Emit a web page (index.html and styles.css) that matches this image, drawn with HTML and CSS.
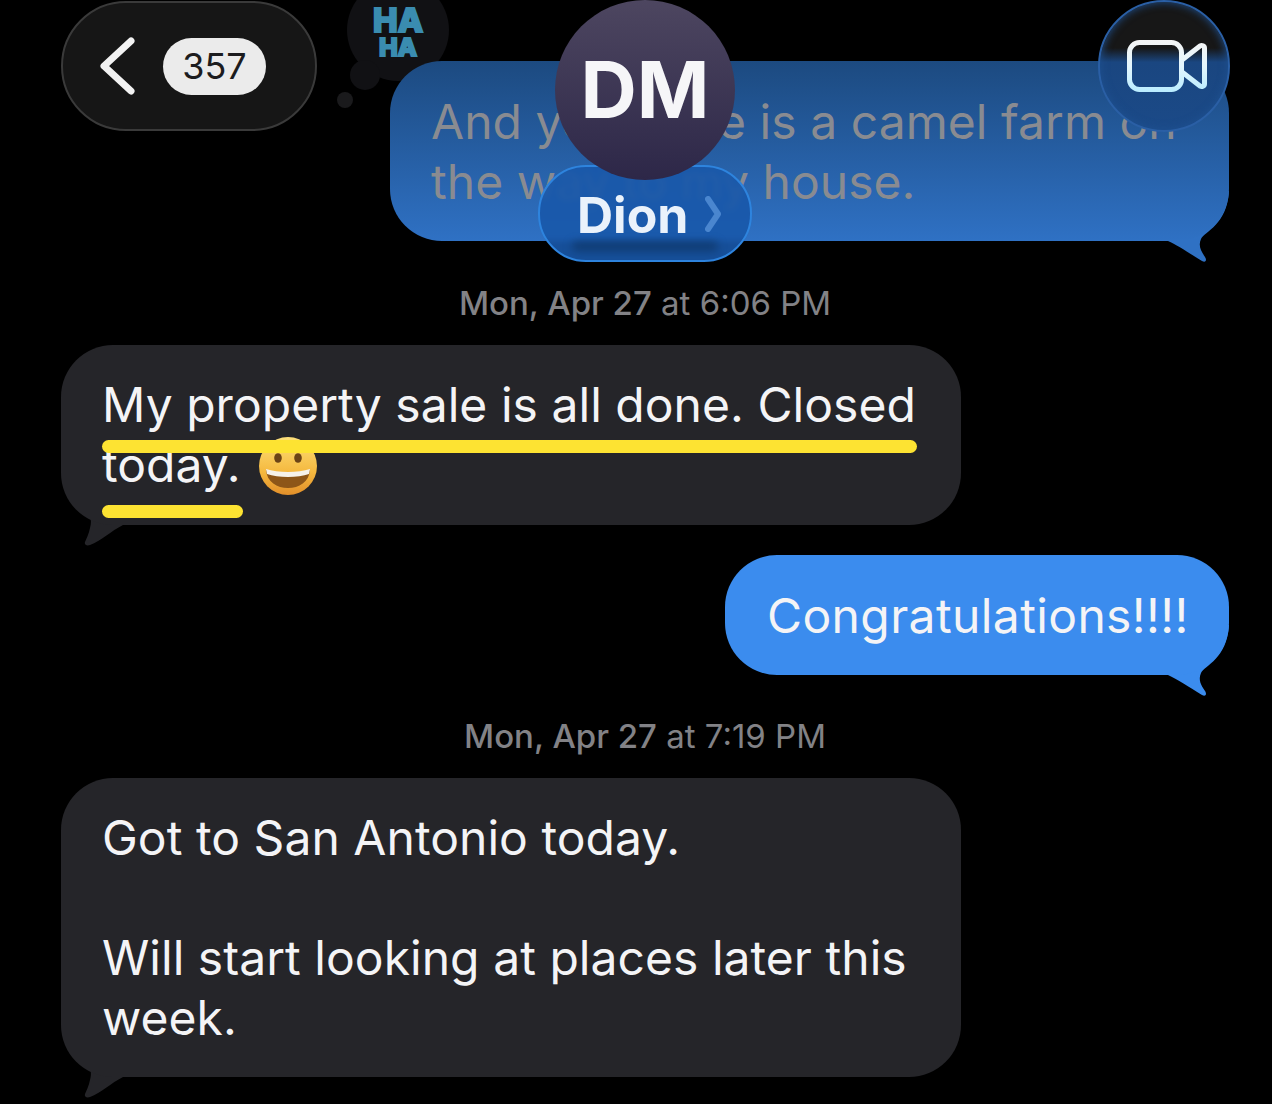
FILE: index.html
```html
<!DOCTYPE html>
<html>
<head>
  <meta charset="UTF-8">
  <link rel="stylesheet" href="styles.css">
</head>
<body>
  <div class="thread">
    <div class="reaction">
      <span class="reaction-dot big"></span>
      <span class="reaction-dot small"></span>
      <div class="reaction-text">
        <div class="ha-top">HA</div>
        <div class="ha-bottom">HA</div>
      </div>
    </div>

    <div class="bubble sent faded first">
      And yes there is a camel farm on the way to my house.
      <svg class="tail tail-right" viewBox="0 0 80 72"><path fill="#2f71c4" d="M0 0 L0 50 L19 50 C28 54 40 62 53 70 C57 72 58 69 56 66 C52 60 49 55 52 48 C56 40 78 34 80 0 Z"/></svg>
    </div>

    <div class="stamp"><b>Mon, Apr 27</b> at 6:06 PM</div>

    <div class="bubble received wide">
      My property sale is all done. Closed today.
      <svg class="emoji" viewBox="0 0 60 60">
        <defs>
          <linearGradient id="face" x1="0" y1="0" x2="0" y2="1">
            <stop offset="0" stop-color="#fde07a"/>
            <stop offset="0.6" stop-color="#f5b93f"/>
            <stop offset="1" stop-color="#e28f2a"/>
          </linearGradient>
        </defs>
        <circle cx="30" cy="30" r="29" fill="url(#face)"/>
        <ellipse cx="20" cy="22" rx="3.8" ry="4.8" fill="#6b4317"/>
        <ellipse cx="40" cy="22" rx="3.8" ry="4.8" fill="#6b4317"/>
        <path fill="#8d5618" d="M8 34 C20 38 40 38 52 34 C51 46 41 52 30 52 C19 52 9 46 8 34 Z"/>
        <path fill="#f6f2ea" d="M8 33 C20 37 40 37 52 33 L51 38 C40 42 20 42 9 38 Z"/>
      </svg>
      <span class="mark mark-one"></span>
      <span class="mark mark-two"></span>
      <svg class="tail tail-left" viewBox="0 0 70 82"><path fill="#252529" d="M0 0 C2 20 12 33 24 43 C30 50 31 56 29 63 C28 69 25 74 24 77 C23 80 26 81 29 80 C40 76 50 66 62 60 L70 60 L70 0 Z"/></svg>
    </div>

    <div class="bubble sent short">
      Congratulations!!!!
      <svg class="tail tail-right" viewBox="0 0 80 72"><path fill="#3b8cee" d="M0 0 L0 50 L19 50 C28 54 40 62 53 70 C57 72 58 69 56 66 C52 60 49 55 52 48 C56 40 78 34 80 0 Z"/></svg>
    </div>

    <div class="stamp late"><b>Mon, Apr 27</b> at 7:19 PM</div>

    <div class="bubble received wide last">
      Got to San Antonio today.<br><br>Will start looking at places later this week.
      <svg class="tail tail-left" viewBox="0 0 70 82"><path fill="#252529" d="M0 0 C2 20 12 33 24 43 C30 50 31 56 29 63 C28 69 25 74 24 77 C23 80 26 81 29 80 C40 76 50 66 62 60 L70 60 L70 0 Z"/></svg>
    </div>
  </div>

  <div class="topbar">
    <div class="back">
      <svg class="chevron" viewBox="0 0 36 58"><path d="M31 4 L4 29 L31 54" fill="none" stroke="#f2f2f2" stroke-width="7" stroke-linecap="round" stroke-linejoin="round"/></svg>
      <span class="count">357</span>
    </div>
    <div class="video">
      <svg class="video-icon" viewBox="0 0 80 52">
        <defs>
          <linearGradient id="cam" gradientUnits="userSpaceOnUse" x1="0" y1="0" x2="0" y2="52">
            <stop offset="0" stop-color="#f4f4f4"/>
            <stop offset="0.5" stop-color="#e4f6fd"/>
            <stop offset="1" stop-color="#b9ecff"/>
          </linearGradient>
        </defs>
        <rect x="2.5" y="2.5" width="52" height="47" rx="10" fill="none" stroke="url(#cam)" stroke-width="5"/>
        <path d="M55 20 L73 6 C75 5 77.5 6 77.5 8 L77.5 44 C77.5 46 75 47 73 46 L55 32" fill="none" stroke="url(#cam)" stroke-width="5" stroke-linejoin="round"/>
      </svg>
    </div>
  </div>

  <div class="contact">
    <div class="name-pill">
      <span class="name">Dion</span>
      <svg class="name-arrow" viewBox="0 0 16 36"><path d="M3 3 L13 18 L3 33" fill="none" stroke="#4a86cf" stroke-width="6" stroke-linecap="round" stroke-linejoin="round"/></svg>
      <span class="name-shadow"></span>
    </div>
    <div class="avatar">DM</div>
  </div>
</body>
</html>
```

FILE: styles.css
```css
* {
  box-sizing: border-box;
}
html {
  background: #000;
}
html, body {
  margin: 0;
  height: 1104px;
  overflow: hidden;
}
body {
  position: relative;
  font-family: Inter, "Liberation Sans", sans-serif;
  color: #f4f4f6;
}
.thread {
  display: flex;
  flex-direction: column;
  padding: 61px 43px 0 61px;
  position: relative;
}
.bubble {
  position: relative;
  padding: 30px 41px;
  border-radius: 52px;
  font-size: 48px;
  line-height: 60px;
  letter-spacing: 0.04px;
}
.bubble.first {
  width: 839px;
  align-self: flex-end;
  padding-top: 31px;
  padding-bottom: 29px;
}
.bubble.wide {
  width: 900px;
  background: #252529;
}
.bubble.short {
  width: 504px;
  margin-top: 30px;
  padding: 31px 41px 29px 42px;
  align-self: flex-end;
  background: #3b8cee;
  white-space: nowrap;
  letter-spacing: 0.38px;
}
.bubble.last {
  padding-top: 30px;
  padding-bottom: 29px;
}
.bubble.faded {
  color: #898b91;
  background: linear-gradient(#1c4a80, #2f71c4);
}
.stamp {
  margin: 42px 0 22px;
  height: 40px;
  line-height: 40px;
  text-align: center;
  font-size: 33px;
  color: #828286;
}
.stamp.late {
  margin-top: 41px;
}
.stamp b {
  font-weight: 500;
}
.tail {
  position: absolute;
  display: block;
  z-index: -1;
}
.tail-right {
  right: 0;
  bottom: -22px;
  width: 80px;
  height: 72px;
}
.tail-left {
  left: 0;
  bottom: -22px;
  width: 70px;
  height: 82px;
}
.emoji {
  width: 60px;
  height: 60px;
  vertical-align: -4px;
  margin: -10px 0 -10px 4px;
}
.mark {
  position: absolute;
  left: 41px;
  height: 13px;
  border-radius: 7px;
  background: #fde332;
}
.mark-one {
  top: 95px;
  width: 815px;
}
.mark-two {
  top: 160px;
  width: 141px;
}
.reaction {
  position: absolute;
  left: 347px;
  top: -21px;
  width: 102px;
  height: 102px;
  border-radius: 50%;
  background: #111114;
  text-align: center;
  z-index: -1;
}
.reaction-dot {
  position: absolute;
  border-radius: 50%;
  background: #111114;
}
.reaction-dot.big {
  left: 3px;
  top: 81px;
  width: 30px;
  height: 30px;
}
.reaction-dot.small {
  left: -10px;
  top: 113px;
  width: 16px;
  height: 16px;
  background: #1a1a1c;
}
.reaction-text {
  position: relative;
  padding-top: 26px;
  font-weight: 800;
  color: #3a8cb0;
  -webkit-text-stroke: 2px #3a8cb0;
}
.ha-top {
  font-size: 33px;
  line-height: 30px;
}
.ha-bottom {
  margin-top: 1px;
  font-size: 25px;
  line-height: 23px;
}
.topbar {
  position: absolute;
  left: 61px;
  right: 42px;
  top: 0;
  display: flex;
  justify-content: space-between;
  align-items: flex-start;
}
.back {
  margin-top: 1px;
  width: 256px;
  height: 130px;
  display: flex;
  align-items: center;
  padding-left: 37px;
  gap: 27px;
  border-radius: 65px;
  background: #161616;
  border: 2px solid #3a3a3a;
}
.chevron {
  width: 36px;
  height: 58px;
}
.count {
  width: 103px;
  height: 57px;
  line-height: 57px;
  border-radius: 29px;
  background: #ebebeb;
  color: #1c1c1e;
  font-size: 36px;
  text-align: center;
}
.video {
  width: 132px;
  height: 132px;
  display: flex;
  align-items: center;
  justify-content: center;
  border-radius: 50%;
  border: 2px solid #2a5fa5;
  background: linear-gradient(#171717 0, #171717 36%, #1a4680 47%, #1b4a88 100%);
  box-shadow: inset 0 0 8px #1f5190;
}
.video-icon {
  width: 80px;
  height: 52px;
  margin-left: 5px;
  margin-top: 0;
}
.contact {
  position: absolute;
  left: 538px;
  top: 0;
  width: 214px;
}
.avatar {
  position: absolute;
  left: 17px;
  top: 0;
  width: 180px;
  height: 180px;
  line-height: 180px;
  border-radius: 50%;
  text-align: center;
  font-size: 78px;
  font-weight: 700;
  color: #f6f6f8;
  background: linear-gradient(#4d4660, #2d2748);
}
.name-pill {
  position: absolute;
  left: 0;
  top: 165px;
  width: 214px;
  height: 97px;
  border-radius: 48px;
  border: 2px solid #2e84de;
  background: rgba(24, 88, 170, 0.9);
  backdrop-filter: blur(3px);
}
.name {
  position: absolute;
  left: 37px;
  top: 20px;
  font-size: 50px;
  line-height: 56px;
  font-weight: 700;
  color: #eaf2fb;
}
.name-arrow {
  position: absolute;
  left: 165px;
  top: 29px;
  width: 16px;
  height: 36px;
}
.name-shadow {
  position: absolute;
  left: 32px;
  right: 32px;
  bottom: 9px;
  height: 9px;
  border-radius: 5px;
  background: #0f3a70;
  filter: blur(4px);
}
```
